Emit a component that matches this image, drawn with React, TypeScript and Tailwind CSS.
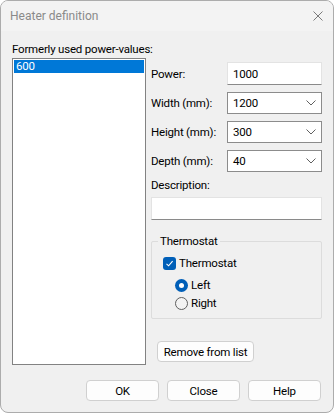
import React from "react";

const Chevron = () => (
  <svg width="10" height="6" viewBox="0 0 10 6" className="shrink-0">
    <path d="M0.5 0.5 L5 5 L9.5 0.5" fill="none" stroke="#606060" strokeWidth="1" />
  </svg>
);

function Combo({ value }: { value: string }) {
  return (
    <div className="w-[95px] h-[22px] bg-white border border-[#8c8c8c] flex items-center justify-between pl-[5px] pr-[5px]">
      <span>{value}</span>
      <Chevron />
    </div>
  );
}

function Edit({ value, w }: { value: string; w: string }) {
  return (
    <div className={`${w} h-[23px] bg-white border border-[#e3e3e3] border-b-[#8a8a8a] flex items-center pl-[5px]`}>
      <span>{value}</span>
    </div>
  );
}

function Btn({ label, w }: { label: string; w: string }) {
  return (
    <div className={`${w} h-[21px] bg-[#fdfdfd] border border-[#d0d0d0] rounded-[4px] flex items-center justify-center`}>
      {label}
    </div>
  );
}

export default function App() {
  return (
    <div className="w-[334px] h-[414px] bg-white font-[Roboto,sans-serif] text-[11.5px] tracking-[-0.2px] leading-[16px] text-black">
      <div className="w-[334px] h-[413px] rounded-[8px] border border-[#acacac] bg-[#f0f0f0] overflow-hidden flex flex-col">
        <div className="h-[30px] bg-[#f3f3f3] flex items-center justify-between pl-[9px] pr-[10px] text-[#8a8a8a] shrink-0">
          <span className="text-[12px] tracking-[0px]">Heater definition</span>
          <svg width="10" height="10" viewBox="0 0 10 10">
            <path d="M0.5 0.5 L9.5 9.5 M9.5 0.5 L0.5 9.5" stroke="#7a7a7a" strokeWidth="1" />
          </svg>
        </div>
        <div className="flex flex-col">
          <div className="flex">
            <div className="ml-[11px] mt-[10px] w-[134px] flex flex-col">
              <div className="h-[16px] whitespace-nowrap">Formerly used power-values:</div>
              <div className="mt-[1px] h-[307px] bg-white border border-[#828282] p-[1px]">
                <div className="h-[13px] bg-[#0078d7] text-white leading-[13px] pl-[2px]">600</div>
              </div>
            </div>
            <div className="ml-[5px] w-[171px] flex flex-col">
              <div className="mt-[31px] flex items-center">
                <span className="w-[76px]">Power:</span>
                <Edit value="1000" w="w-[95px]" />
              </div>
              <div className="mt-[7px] flex items-center">
                <span className="w-[76px]">Width (mm):</span>
                <Combo value="1200" />
              </div>
              <div className="mt-[7px] flex items-center">
                <span className="w-[76px]">Height (mm):</span>
                <Combo value="300" />
              </div>
              <div className="mt-[7px] flex items-center">
                <span className="w-[76px]">Depth (mm):</span>
                <Combo value="40" />
              </div>
              <div className="mt-[5px] h-[16px]">Description:</div>
              <div className="mt-[4px]">
                <Edit value="" w="w-[171px]" />
              </div>
              <div className="mt-[21px] relative border border-[#dcdcdc] rounded-[2px] pl-[11px] pt-[13px] pb-[6px]">
                <span className="absolute left-[6px] top-[-9px] px-[2px] bg-[#f0f0f0]">Thermostat</span>
                <div className="flex items-center h-[16px]">
                  <div className="w-[13px] h-[13px] rounded-[3px] bg-[#005fb8] flex items-center justify-center">
                    <svg width="9" height="9" viewBox="0 0 9 9">
                      <path d="M1.5 4.8 L3.6 6.8 L7.6 2.2" fill="none" stroke="white" strokeWidth="1.1" />
                    </svg>
                  </div>
                  <span className="ml-[3px]">Thermostat</span>
                </div>
                <div className="mt-[5px] ml-[12px] flex items-center h-[18px]">
                  <div className="w-[13px] h-[13px] rounded-full bg-[#005fb8] flex items-center justify-center">
                    <div className="w-[5px] h-[5px] rounded-full bg-white" />
                  </div>
                  <span className="ml-[3px]">Left</span>
                </div>
                <div className="ml-[12px] flex items-center h-[18px]">
                  <div className="w-[13px] h-[13px] rounded-full border border-[#5f5f5f] bg-[#f3f3f3]" />
                  <span className="ml-[3px]">Right</span>
                </div>
              </div>
              <div className="mt-[22px] ml-[6px]">
                <Btn label="Remove from list" w="w-[97px]" />
              </div>
            </div>
          </div>
          <div className="mt-[15px] flex justify-end gap-[8px] pr-[12px]">
            <Btn label="OK" w="w-[73px]" />
            <Btn label="Close" w="w-[73px]" />
            <Btn label="Help" w="w-[73px]" />
          </div>
        </div>
      </div>
    </div>
  );
}
